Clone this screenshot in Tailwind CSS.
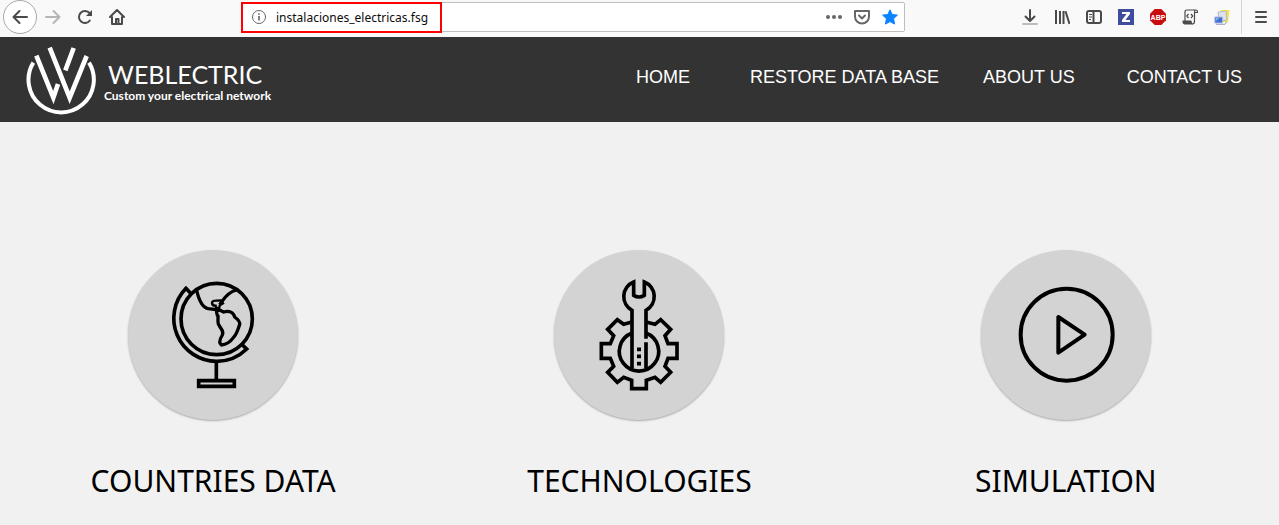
<!DOCTYPE html>
<html lang="en">
<head>
<meta charset="utf-8">
<meta name="viewport" content="width=device-width, initial-scale=1">
<title>Weblectric</title>
<script src="https://cdn.jsdelivr.net/npm/@tailwindcss/browser@4"></script>
</head>
<body class="min-h-screen bg-[#f1f1f1] font-['Liberation_Sans',sans-serif]">

<!-- Browser toolbar -->
<div class="flex h-[37px] items-start bg-[#f9f9fa] text-[#4a4a4c]">
  <div class="flex w-[241px] shrink-0 items-center pl-[3px]">
    <button aria-label="Back" class="flex size-[34px] items-center justify-center rounded-full border border-[#a8a8a8] bg-white">
      <svg class="size-4" viewBox="0 0 16 16" fill="none" stroke="currentColor" stroke-width="2" stroke-linecap="round" stroke-linejoin="round"><path d="M15 8H1.500M7.500 2L1.500 8l6 6"/></svg>
    </button>
    <button aria-label="Forward" class="flex h-[34px] w-8 items-center justify-center text-[#b5b5b5]">
      <svg class="size-4" viewBox="0 0 16 16" fill="none" stroke="currentColor" stroke-width="2" stroke-linecap="round" stroke-linejoin="round"><path d="M1 8h13.500M8.500 2l6 6-6 6"/></svg>
    </button>
    <button aria-label="Reload" class="flex h-[34px] w-8 items-center justify-center">
      <svg class="size-4" viewBox="0 0 16 16" fill="none" stroke="currentColor" stroke-width="2" stroke-linecap="round"><path d="M12.800 11.500A6 6 0 1 1 12.500 4"/><path d="M15 1v6H9z" fill="currentColor" stroke="none"/></svg>
    </button>
    <button aria-label="Home" class="flex h-[34px] w-8 items-center justify-center">
      <svg class="size-4" viewBox="0 0 16 16" fill="none" stroke="currentColor" stroke-width="2" stroke-linecap="round" stroke-linejoin="round"><path d="M1 8l7-7 7 7M3 8v7h10V8"/><path d="M7 15v-5h2.500v5" stroke-width="2"/></svg>
    </button>
  </div>

  <div class="relative mt-[2px] flex h-[30px] flex-1 items-center rounded-xs border border-[#bebebe] bg-white pr-[6px] pl-[9px] text-[#666]">
    <div class="pointer-events-none absolute -top-px -left-px h-[31px] w-[201px] border-2 border-[#ff0000]"></div>
    <svg class="size-4 shrink-0" viewBox="0 0 16 16" fill="none" stroke="currentColor"><circle cx="8" cy="8" r="6.500"/><path d="M8 7v4.500M8 4.200v1.600" stroke-width="1.600"/></svg>
    <input aria-label="Address" value="instalaciones_electricas.fsg" class="ml-[9px] min-w-0 flex-1 bg-transparent pt-px font-['Noto_Sans',sans-serif] text-[12px] text-[#0c0c0d] outline-none">
    <div class="flex gap-3">
      <button aria-label="Page actions"><svg class="size-4" viewBox="0 0 16 16" fill="currentColor"><circle cx="2" cy="8" r="2"/><circle cx="8" cy="8" r="2"/><circle cx="14" cy="8" r="2"/></svg></button>
      <button aria-label="Save to Pocket"><svg class="size-4" viewBox="0 0 16 16" fill="none" stroke="currentColor" stroke-width="2" stroke-linejoin="round" stroke-linecap="round"><path d="M1 2h14v5.500a7 7 0 0 1-14 0z"/><path d="M5 6.500l3 3 3-3"/></svg></button>
      <button aria-label="Bookmark" class="text-[#0a84ff]"><svg class="size-4" viewBox="0 0 16 16" fill="currentColor" stroke="currentColor" stroke-linejoin="round"><path d="M8 .8l2.200 4.700 5.200.6-3.800 3.600 1 5.400L8 12.600l-4.600 2.500 1-5.400L.6 6.100l5.200-.6z"/></svg></button>
    </div>
  </div>

  <div class="flex h-[34px] w-[374px] shrink-0 items-center justify-end pr-[2px]">
    <button aria-label="Downloads" class="flex w-8 justify-center"><svg class="size-4" viewBox="0 0 16 16" fill="none" stroke="currentColor" stroke-width="2" stroke-linecap="round" stroke-linejoin="round"><path d="M8 1v10.500M3.500 7.500L8 12l4.500-4.500"/><path d="M1 15h14" stroke="#bcbcbc"/></svg></button>
    <button aria-label="Library" class="flex w-8 justify-center"><svg class="size-4" viewBox="0 0 16 16" fill="none" stroke="currentColor" stroke-width="2"><path d="M2 1v14M6 2v13M9.500 2v13M11.500 2.300L15.500 15"/></svg></button>
    <button aria-label="Sidebar" class="flex w-8 justify-center"><svg class="size-4" viewBox="0 0 16 16" fill="none" stroke="currentColor" stroke-width="2"><rect x="1" y="2" width="14" height="12" rx="2"/><path d="M7.500 2v12"/><path d="M3 5.500h3M3 8h3M3 10.500h2" stroke-width="1"/></svg></button>
    <button aria-label="Zotero" class="flex w-8 justify-center"><svg class="size-4" viewBox="0 0 16 16"><path d="M0 0h16v16H0z" fill="#3f4d9e"/><path d="M4 3h8v2l-4.600 6H12v2H4v-2l4.600-6H4z" fill="#fff"/></svg></button>
    <button aria-label="Adblock Plus" class="flex w-8 justify-center"><svg class="size-4" viewBox="0 0 16 16"><path d="M4.700 0h6.600L16 4.700v6.600L11.300 16H4.700L0 11.300V4.700z" fill="#c70d0d"/><text x="8" y="10.500" text-anchor="middle" font-family="Liberation Sans" font-size="7" font-weight="700" fill="#fff">ABP</text></svg></button>
    <button aria-label="User scripts" class="flex w-8 justify-center"><svg class="size-4" viewBox="0 0 16 16" fill="none" stroke="currentColor" stroke-width="1.200" stroke-linejoin="round"><path d="M3 12V3Q3 1 5 1h9q-1.500 0-1.500 2v9q0 3-2 3M14 1q1.500 0 1.500 2.500h-3"/><path d="M1 12h8q0 3 1.500 3H3q-2 0-2-3z" fill="currentColor"/><path d="M6.500 5L4.800 7l1.700 2M9 5l1.700 2L9 9"/></svg></button>
    <button aria-label="Proxy settings" class="flex w-8 justify-center"><svg class="size-4" viewBox="0 0 16 16"><path d="M7 1h8.500l-1.500 12H9z" fill="#f4e54a"/><path d="M4 3l8-1 1 9-8 1z" fill="#dfe1ec" stroke="#a7abc0" stroke-width=".8"/><path d="M.8 8h7.800v6H.8z" fill="#3d6fd0" stroke="#b3bde0"/><path d="M1.500 9h4L2 12z" fill="#7fb0f0"/><path d="M2 15.300h9l2-2.800" stroke="#9b9fc0" fill="none"/></svg></button>
    <div class="mx-[3px] h-[34px] w-px bg-[#d4d4d6]"></div>
    <button aria-label="Menu" class="flex w-8 justify-center"><svg class="size-4" viewBox="0 0 16 16" fill="none" stroke="currentColor" stroke-width="2" stroke-linecap="round"><path d="M3 3h10M3 8h10M3 13h10"/></svg></button>
  </div>
</div>

<!-- Site header -->
<header class="flex h-[85px] items-center justify-between bg-[#333] pr-[37px] pl-[26px] text-white">
  <a href="#" class="flex items-center">
    <svg class="size-[70px]" viewBox="79 133 210 210" fill="none" stroke="#fff" stroke-width="14">
      <path d="M101 186A98 98 0 1 0 268 186" stroke-width="12"/>
      <path d="M110 165L161 291 175 250M150 141L210 291 261 166M222 142L197 209" stroke-miterlimit="8"/>
    </svg>
    <span class="ml-2 flex flex-col pt-1">
      <span class="pl-1 font-['Lato',sans-serif] text-[25px] leading-7">WEBLECTRIC</span>
      <span class="font-['Lato',sans-serif] text-[12px] leading-4 font-bold">Custom your electrical network</span>
    </span>
  </a>
  <nav class="flex pb-[5px] text-[18px] leading-6 whitespace-nowrap">
    <a href="#">HOME</a>
    <a href="#" class="ml-15">RESTORE DATA BASE</a>
    <a href="#" class="ml-11">ABOUT US</a>
    <a href="#" class="ml-13">CONTACT US</a>
  </nav>
</header>

<!-- Sections -->
<main class="grid grid-cols-3 pt-32 font-['Noto_Sans',sans-serif] text-[30px] leading-10 text-black">
  <a href="#" class="flex flex-col items-center gap-[41px]">
    <svg class="size-[170px] rounded-full bg-[#d3d3d3] shadow-[0_1px_2px_rgba(0,0,0,0.3)]" viewBox="24 30 510 510" fill="none" stroke="#000" stroke-width="11">
      <circle cx="290" cy="237" r="107"/>
      <path d="M212 160L198 145A129 129 0 0 0 290 364A129 129 0 0 0 380 327L366 314"/>
      <path d="M289 366v55M236 422h107v17H236z"/>
      <path d="M230 151C236 177 247 203 265 206L288 209M350 150C329 155 317 168 306 184L299 194M288 209L303 212 311 216C328 210 341 218 344 231C354 238 361 245 359 254C355 264 352 281 340 293C331 306 315 314 304 315C296 309 301 295 307 285C313 273 302 267 298 257C291 250 295 236 294 228C288 224 292 215 288 209" stroke-width="10" stroke-linejoin="round"/>
      <path d="M276 189Q276 182 287 182L303 181 309 190 299 196 298 204H288L287 197Q277 198 276 189z" stroke-width="7"/>
    </svg>
    <span>COUNTRIES DATA</span>
  </a>
  <a href="#" class="flex flex-col items-center gap-[41px]">
    <svg class="size-[170px] rounded-full bg-[#d3d3d3] shadow-[0_1px_2px_rgba(0,0,0,0.3)]" viewBox="28 30 510 510" fill="none" stroke="#000" stroke-width="11">
      <path d="M262 385V211A47 47 0 0 1 267 126V166Q283 176 299 166V126A47 47 0 0 1 304 211V296M304 307V385"/>
      <path d="M262 279A59 59 0 1 0 304 279"/>
      <path d="M262 246L237 253 218 239 189 268 207 287 197 311H170V355H197L207 379 189 397 218 427 237 412 261 421V446H305V421L331 412 348 427 378 397 361 379 370 355H397V311H370L361 287 378 268 348 239 331 253 304 246"/>
      <path d="M277 328h12M277 349h12M277 371h12" stroke-width="11"/>
    </svg>
    <span>TECHNOLOGIES</span>
  </a>
  <a href="#" class="flex flex-col items-center gap-[41px]">
    <svg class="size-[170px] rounded-full bg-[#d3d3d3] shadow-[0_1px_2px_rgba(0,0,0,0.3)]" viewBox="28 30 510 510" fill="none" stroke="#000" stroke-width="12" stroke-linejoin="round">
      <circle cx="285" cy="284" r="138"/>
      <path d="M260 231V338L339 284z"/>
    </svg>
    <span>SIMULATION</span>
  </a>
</main>
</body>
</html>
